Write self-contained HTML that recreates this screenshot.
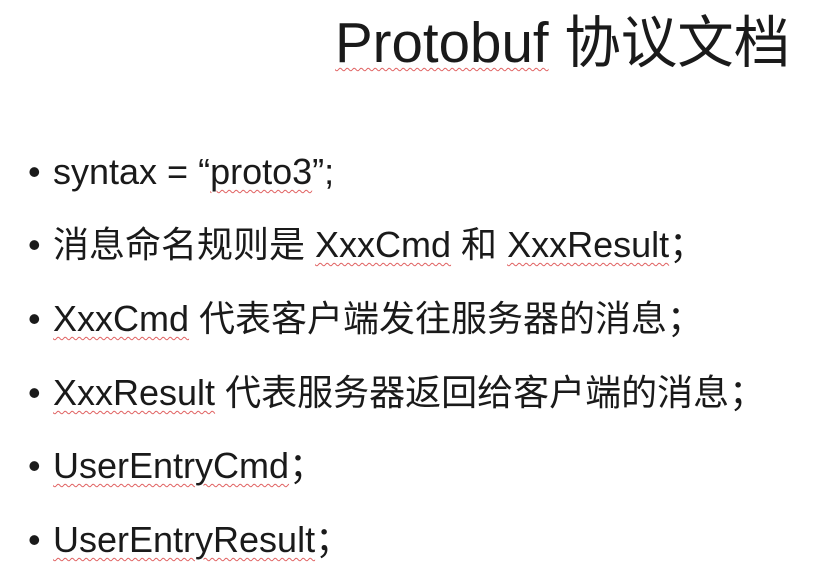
<!DOCTYPE html>
<html><head><meta charset="utf-8"><style>
html,body{margin:0;padding:0;background:#fff;}
body{width:834px;height:580px;position:relative;overflow:hidden;font-family:"Liberation Sans","Noto Sans CJK SC",sans-serif;color:#1a1a1a;}
.t{position:absolute;left:335px;top:8px;font-size:56.5px;line-height:70px;white-space:nowrap;}
.l{position:absolute;left:28px;font-size:36px;line-height:44px;white-space:nowrap;}
.l b{font-weight:normal;display:inline-block;width:25px;}
u{text-decoration:underline wavy #e06060;text-decoration-thickness:1px;text-underline-offset:5px;}
</style></head><body>
<div class="t"><u>Protobuf</u> 协议文档</div>
<div class="l" style="top:150px"><b>•</b>syntax = “<u>proto3</u>”;</div>
<div class="l" style="top:223px"><b>•</b>消息命名规则是 <u>XxxCmd</u> 和 <u>XxxResult</u>；</div>
<div class="l" style="top:297px"><b>•</b><u>XxxCmd</u> 代表客户端发往服务器的消息；</div>
<div class="l" style="top:371px"><b>•</b><u>XxxResult</u> 代表服务器返回给客户端的消息；</div>
<div class="l" style="top:444px"><b>•</b><u>UserEntryCmd</u>；</div>
<div class="l" style="top:518px"><b>•</b><u>UserEntryResult</u>；</div>
</body></html>
